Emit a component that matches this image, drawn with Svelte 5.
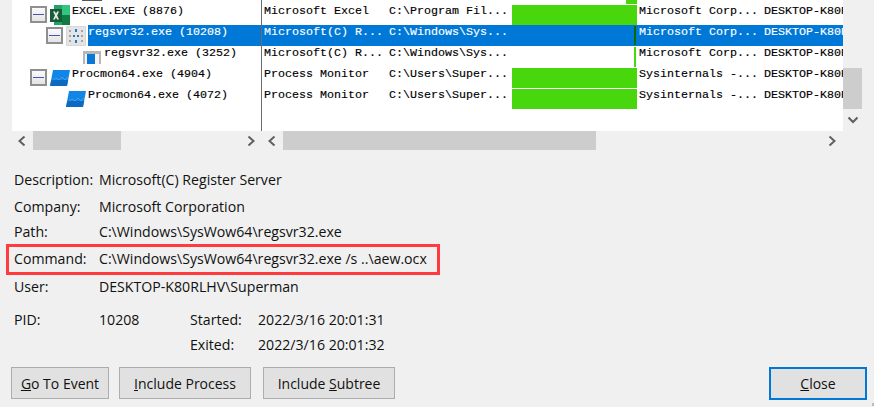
<script>
  const rows = [
    { name: 'EXCEL.EXE (8876)', depth: 0, toggle: true, icon: 'excel', desc: 'Microsoft Excel', path: 'C:\\Program Fil...', bar: 'full', company: 'Microsoft Corp...' },
    { name: 'regsvr32.exe (10208)', depth: 1, toggle: true, icon: 'grid', desc: 'Microsoft(C) R...', path: 'C:\\Windows\\Sys...', bar: 'end', company: 'Microsoft Corp...', selected: true },
    { name: 'regsvr32.exe (3252)', depth: 2, icon: 'window', desc: 'Microsoft(C) R...', path: 'C:\\Windows\\Sys...', bar: 'end', company: 'Microsoft Corp...' },
    { name: 'Procmon64.exe (4904)', depth: 0, toggle: true, icon: 'procmon', desc: 'Process Monitor', path: 'C:\\Users\\Super...', bar: 'full', company: 'Sysinternals -...' },
    { name: 'Procmon64.exe (4072)', depth: 1, icon: 'procmon', desc: 'Process Monitor', path: 'C:\\Users\\Super...', bar: 'full', company: 'Sysinternals -...' }
  ];

  const details = [
    ['Description:', 'Microsoft(C) Register Server'],
    ['Company:', 'Microsoft Corporation'],
    ['Path:', 'C:\\Windows\\SysWow64\\regsvr32.exe'],
    ['Command:', 'C:\\Windows\\SysWow64\\regsvr32.exe /s ..\\aew.ocx'],
    ['User:', 'DESKTOP-K80RLHV\\Superman']
  ];
</script>

{#snippet chevron(dir)}
  <svg class="chevron" width="10" height="12" viewBox="0 0 10 12">
    {#if dir === 'left'}
      <path d="M7.5 1.5 L2.5 6 L7.5 10.5" />
    {:else if dir === 'right'}
      <path d="M2.5 1.5 L7.5 6 L2.5 10.5" />
    {:else}
      <path d="M0.5 3.5 L5 8 L9.5 3.5" />
    {/if}
  </svg>
{/snippet}

{#snippet processIcon(kind)}
  {#if kind === 'excel'}
    <svg width="20" height="20" viewBox="0 0 20 20">
      <rect x="4" y="0" width="16" height="20" fill="#21a366" />
      <rect x="12" y="0" width="8" height="10" fill="#33c481" />
      <rect x="12" y="10" width="8" height="10" fill="#107c41" />
      <rect x="0" y="4" width="12" height="13" fill="#185c37" />
      <path d="M3 6.5 H5 L6 8.8 L7.1 6.5 H9 L7.1 10.5 L9 14.5 H7.1 L6 12.2 L4.9 14.5 H3 L5 10.5 Z" fill="#e8efe9" />
    </svg>
  {:else if kind === 'grid'}
    <svg width="20" height="20" viewBox="0 0 20 20">
      <rect x="0.5" y="0.5" width="19" height="19" fill="#e4e4e4" stroke="#bdbdbd" stroke-dasharray="1 1" />
      <g fill="#a4a4a4">
        <rect x="3" y="4" width="2" height="2" /><rect x="15" y="4" width="2" height="2" />
        <rect x="3" y="9" width="2" height="2" /><rect x="15" y="9" width="2" height="2" />
        <rect x="3" y="14" width="2" height="2" /><rect x="15" y="14" width="2" height="2" />
      </g>
      <g fill="#1f78c8">
        <rect x="9" y="3" width="2" height="3" /><rect x="7" y="9" width="2" height="2" />
        <rect x="11" y="9" width="2" height="2" /><rect x="9" y="14" width="2" height="3" />
      </g>
    </svg>
  {:else if kind === 'window'}
    <svg class="window-icon" width="18" height="13" viewBox="0 0 18 13">
      <rect x="0" y="0" width="18" height="13" fill="#b7b7b7" />
      <rect x="2" y="3" width="14" height="10" fill="#f4f4f4" />
      <rect x="4" y="3" width="8" height="10" fill="#0a78d6" />
    </svg>
  {:else}
    <svg width="20" height="16" viewBox="0 0 20 16">
      <path d="M3 0 H20 L17 16 H0 Z" fill="#1186e6" />
      <path d="M2 11 L6 8 L9 10 L12 7 L15 10 L18 7" fill="none" stroke="#4b9fe0" stroke-width="1" />
      <path d="M1.2 10 H18.2 L17 16 H0 Z" fill="#0b62b4" opacity="0.75" />
    </svg>
  {/if}
{/snippet}

<div class="dialog">
  <div class="lists">
    <div class="panes">
      <div class="tree">
        <div class="stub"><span class="stub-icon"></span></div>
        {#each rows as row}
          <div class="tree-row" style="padding-left: {18 + row.depth * 16}px">
            <span class="toggle-slot">
              {#if row.toggle}<span class="toggle"></span>{/if}
            </span>
            <span class="icon-slot">{@render processIcon(row.icon)}</span>
            <span class="tree-name" class:selected={row.selected}>{row.name}</span>
          </div>
        {/each}
      </div>
      <div class="splitter"></div>
      <div class="table">
        <div class="stub"><span class="stub-bar"></span></div>
        {#each rows as row}
          <div class="table-row" class:selected={row.selected}>
            <span class="cell first">{row.desc}</span>
            <span class="cell">{row.path}</span>
            <span class="bar-cell">
              <span class="bar {row.bar}"></span>
            </span>
            <span class="cell company">{row.company}</span>
            <span class="cell">DESKTOP-K80RLHV</span>
          </div>
        {/each}
      </div>
    </div>
    <div class="vscroll">
      <span class="vspacer"></span>
      <span class="vthumb"></span>
      <span class="varrow">{@render chevron('down')}</span>
    </div>
    <div class="hscroll left-scroll">
      {@render chevron('left')}
      <span class="hthumb left-thumb"></span>
      {@render chevron('right')}
    </div>
    <div class="hscroll right-scroll">
      {@render chevron('left')}
      <span class="hthumb right-thumb"></span>
      {@render chevron('right')}
    </div>
  </div>

  <div class="details">
    {#each details as [label, value]}
      <div class="detail" class:marked={label === 'Command:'}>
        <span class="label">{label}</span>
        <span>{value}</span>
      </div>
    {/each}
    <div class="detail times">
      <span class="label">PID:</span>
      <span class="pid">10208</span>
      <span class="time-label">Started:</span>
      <span>2022/3/16 20:01:31</span>
    </div>
    <div class="detail times">
      <span class="label"></span>
      <span class="pid"></span>
      <span class="time-label">Exited:</span>
      <span>2022/3/16 20:01:32</span>
    </div>
  </div>

  <div class="buttons">
    <button class="go"><u>G</u>o To Event</button>
    <button class="include"><u>I</u>nclude Process</button>
    <button class="include subtree">Include <u>S</u>ubtree</button>
    <button class="close"><u>C</u>lose</button>
  </div>
  <span class="grip"></span>
</div>

<style>
  :global(body) {
    margin: 0;
    background: #f0f0f0;
  }

  .dialog {
    position: relative;
    width: 874px;
    height: 407px;
    overflow: hidden;
    background: #f0f0f0;
    color: #111;
    font-family: 'Open Sans', sans-serif;
    font-size: 14.15px;
  }

  .lists {
    display: grid;
    grid-template-columns: 249px 582px 19px;
    grid-template-rows: 131px 19px;
    margin-left: 12px;
    width: 850px;
  }

  .panes {
    grid-column: 1 / 3;
    display: flex;
    background: #fff;
    overflow: hidden;
    font-family: 'Liberation Mono', monospace;
    font-size: 11.67px;
    color: #000;
    -webkit-text-stroke: 0.15px currentColor;
  }

  .tree {
    width: 249px;
    flex: none;
  }

  .stub {
    height: 4px;
    display: flex;
  }

  .stub-icon {
    margin-left: 70px;
    width: 20px;
    height: 1px;
    background: #555;
  }

  .stub-bar {
    margin-left: 364px;
    width: 11px;
    background: #48d60c;
  }

  .tree-row {
    height: 21px;
    display: flex;
    align-items: center;
    box-sizing: border-box;
    white-space: nowrap;
  }

  .toggle-slot {
    width: 20px;
    flex: none;
    display: flex;
  }

  .toggle {
    width: 17px;
    height: 17px;
    box-sizing: border-box;
    border: 2px solid #8f8f8f;
    background: linear-gradient(#fafafa, #e4e4e4);
    display: flex;
    align-items: center;
    justify-content: center;
  }

  .toggle::before {
    content: '';
    width: 11px;
    height: 1px;
    background: #3f5aa8;
  }

  .icon-slot {
    width: 22px;
    flex: none;
    display: flex;
    align-items: center;
  }

  .window-icon {
    margin: 1px 0 0 1px;
  }

  .tree-name {
    flex: 1;
    height: 21px;
    line-height: 15px;
  }

  .tree-name.selected {
    background: #0078d7;
    color: #fff;
  }

  .splitter {
    width: 1px;
    flex: none;
    background: #6b6b6b;
    position: relative;
    z-index: 1;
  }

  .table {
    flex: 1;
    min-width: 0;
  }

  .table-row {
    height: 21px;
    display: grid;
    grid-template-columns: 126px 124px 125px 126px 1fr;
    white-space: nowrap;
    line-height: 15px;
  }

  .table-row.selected {
    background: #0078d7;
    color: #fff;
  }

  .cell {
    padding-left: 1px;
    overflow: hidden;
  }

  .first {
    padding-left: 2px;
  }

  .company {
    padding-left: 2px;
  }

  .bar-cell {
    padding-top: 1px;
    display: flex;
    justify-content: flex-end;
  }

  .bar {
    background: #48d60c;
    height: 20px;
  }

  .bar.full {
    width: 125px;
  }

  .bar.end {
    width: 2px;
    margin-right: 1px;
  }

  .selected .bar.end {
    background: #006b00;
    height: 19px;
    margin-right: 1px;
  }

  .vscroll {
    display: flex;
    flex-direction: column;
  }

  .vspacer {
    height: 68px;
  }

  .vthumb {
    height: 41px;
    background: #cdcdcd;
  }

  .varrow {
    height: 22px;
    display: flex;
    align-items: center;
    justify-content: center;
  }

  .hscroll {
    display: flex;
    align-items: center;
    height: 19px;
  }

  .left-scroll {
    padding: 0 5px;
  }

  .right-scroll {
    padding: 0 6px;
  }

  .hthumb {
    background: #cdcdcd;
    height: 19px;
  }

  .left-thumb {
    width: 88px;
    margin: 0 auto 0 6px;
  }

  .right-thumb {
    width: 313px;
    margin: 0 auto 0 6px;
  }

  .chevron {
    flex: none;
    fill: none;
    stroke: #606060;
    stroke-width: 2;
  }

  .details {
    display: grid;
    grid-template-rows: 27px 25px 27px 28px 33px 25px 25px;
    margin: 17px 0 0 14px;
    height: 192px;
  }

  .detail {
    display: flex;
    align-items: center;
    white-space: nowrap;
    position: relative;
    height: 25px;
  }

  .label {
    width: 85px;
    flex: none;
  }

  .pid {
    width: 91px;
    flex: none;
  }

  .time-label {
    width: 68px;
    flex: none;
  }

  .marked::after {
    content: '';
    position: absolute;
    left: -8px;
    top: -2px;
    width: 434px;
    height: 31px;
    box-sizing: border-box;
    border: 3px solid #ff3b3f;
  }

  .buttons {
    display: flex;
    margin: 8px 7px 0 11px;
  }

  button {
    height: 32px;
    background: #e1e1e1;
    border: 1px solid #adadad;
    color: #111;
    font: inherit;
    font-size: 14px;
    padding: 0;
    box-sizing: border-box;
  }

  .go {
    width: 98px;
    margin-right: 10px;
  }

  .include {
    width: 132px;
  }

  .subtree {
    margin-left: 12px;
  }

  .close {
    width: 98px;
    height: 33px;
    margin-left: auto;
    border: 2px solid #0078d7;
  }

  .grip {
    position: absolute;
    right: 0;
    bottom: 1px;
    width: 2px;
    height: 3px;
    background: #bdbdbd;
  }
</style>
